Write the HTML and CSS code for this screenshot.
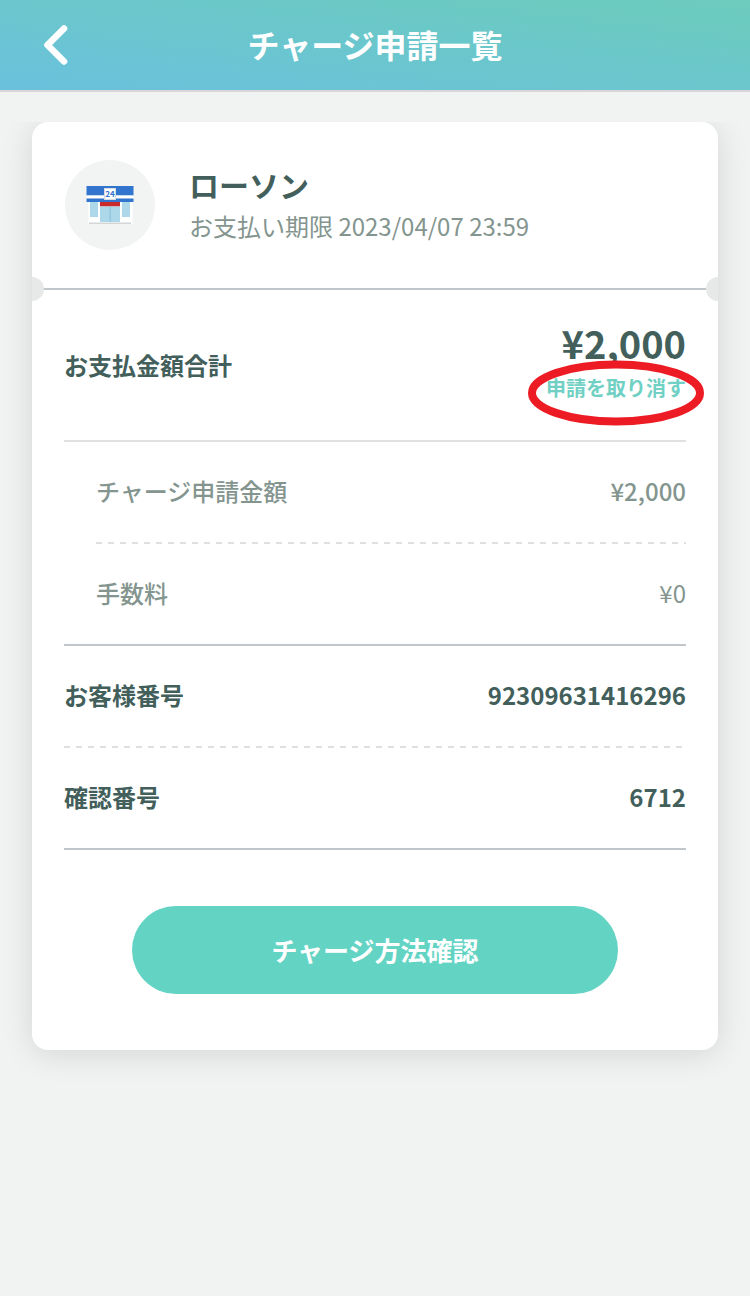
FILE: index.html
```html
<!DOCTYPE html>
<html lang="ja">
  <head>
    <meta charset="UTF-8" />
    <meta name="viewport" content="width=device-width, initial-scale=1.0" />
    <title>チャージ申請一覧</title>
    <link rel="stylesheet" href="styles.css">
  </head>
  <body>
    <header class="header">
      <button type="button" class="back" aria-label="戻る">
        <svg width="24" height="40" viewBox="0 0 24 40">
          <path d="M20 3.5 L3.5 20 L20 36.5" fill="none" stroke="#fff" stroke-width="6.6" stroke-linecap="round" stroke-linejoin="round" />
        </svg>
      </button>
      <h1>チャージ申請一覧</h1>
    </header>

    <main class="main">
      <section class="card">
        <div class="store">
          <div class="store-icon">
            <svg width="90" height="90" viewBox="0 0 90 90">
              <rect x="23.5" y="40" width="44" height="24" fill="#fff" />
              <rect x="21.5" y="26" width="47" height="9.5" fill="#3175cf" />
              <rect x="21.5" y="35.5" width="47" height="3" fill="#fff" />
              <rect x="21.5" y="38.5" width="47" height="3.5" fill="#3175cf" />
              <rect x="25" y="42" width="8" height="15" fill="#add8ea" />
              <rect x="57" y="42" width="8" height="15" fill="#add8ea" />
              <rect x="35" y="42" width="20" height="4.5" fill="#c92a2a" />
              <rect x="35" y="46.5" width="20" height="15.5" fill="#add8ea" />
              <rect x="44.5" y="46.5" width="1.5" height="15.5" fill="#93c7de" />
              <rect x="24" y="62.5" width="42" height="1.5" fill="#d3d5d6" />
              <rect x="39.5" y="28.5" width="11" height="11" fill="#fff" stroke="#d5dbe0" />
              <text x="45" y="37" text-anchor="middle" class="store-sign">24</text>
            </svg>
          </div>
          <div class="store-text">
            <h2>ローソン</h2>
            <p>お支払い期限 2023/04/07 23:59</p>
          </div>
        </div>

        <dl class="details">
          <div class="row total">
            <dt>お支払金額合計</dt>
            <dd>
              <span class="price">¥2,000</span>
              <button type="button" class="cancel">
                申請を取り消す
                <svg class="marker" width="176" height="66" viewBox="0 0 176 66">
                  <ellipse cx="88" cy="33" rx="84" ry="28.5" fill="none" stroke="#ed1c24" stroke-width="8" />
                </svg>
              </button>
            </dd>
          </div>
          <div class="row sub dashed">
            <dt>チャージ申請金額</dt>
            <dd>¥2,000</dd>
          </div>
          <div class="row sub">
            <dt>手数料</dt>
            <dd class="fee">¥0</dd>
          </div>
          <div class="row dashed">
            <dt>お客様番号</dt>
            <dd>92309631416296</dd>
          </div>
          <div class="row">
            <dt>確認番号</dt>
            <dd>6712</dd>
          </div>
        </dl>

        <button type="button" class="submit">チャージ方法確認</button>
      </section>
    </main>
  </body>
</html>
```
FILE: styles.css
```css
/* Reset */
* {
  margin: 0;
  padding: 0;
  box-sizing: border-box;
}

body {
  font-family: "Noto Sans CJK JP", sans-serif;
  font-size: 24px;
  line-height: 36px;
  background: #f1f3f3;
  color: #435f5b;
  min-height: 100vh;
}

button {
  font-family: inherit;
  border: none;
  background: none;
  cursor: pointer;
}

svg {
  display: block;
}

/* Header */
.header {
  display: grid;
  grid-template-columns: 80px 1fr 80px;
  align-items: center;
  height: 92px;
  background: linear-gradient(to top right, #69c1dd, #6cccbc);
  border-bottom: 2px solid #d9d6d9;
}

.header h1 {
  padding-bottom: 2px;
  font-size: 32px;
  font-weight: 700;
  line-height: 48px;
  text-align: center;
  color: #fff;
}

.back {
  justify-self: end;
  padding: 0 12px;
}

/* Card */
.main {
  margin-top: 30px;
  padding: 0 32px 60px;
  overflow: hidden;
}

.card {
  background: #fff;
  border-radius: 16px;
  box-shadow: 0 4px 32px rgba(20, 0, 0, 0.12);
  padding-bottom: 56px;
}

/* Store */
.store {
  position: relative;
  display: flex;
  align-items: center;
  gap: 34px;
  height: 168px;
  padding: 0 33px;
  border-bottom: 2px solid #c1c6ca;
}

/* ticket notches */
.store::before,
.store::after {
  content: "";
  position: absolute;
  bottom: -13px;
  width: 12px;
  height: 24px;
  background: #e7e9e9;
}

.store::before {
  left: 0;
  border-radius: 0 12px 12px 0;
}

.store::after {
  right: 0;
  border-radius: 12px 0 0 12px;
}

.store-icon {
  border-radius: 50%;
  background: #f2f4f4;
}

.store-sign {
  font-size: 8px;
  font-weight: 700;
  fill: #3175cf;
}

.store-text {
  padding-bottom: 2px;
}

.store-text h2 {
  font-size: 30px;
  font-weight: 700;
  line-height: 44px;
}

.store-text p {
  color: #84958f;
  font-weight: 400;
  line-height: 40px;
}

/* Details */
.details {
  padding: 0 32px;
}

.row {
  display: flex;
  align-items: center;
  justify-content: space-between;
  height: 102px;
  padding-bottom: 2px;
  border-bottom: 2px solid #c1c6ca;
  font-weight: 700;
}

.row.total {
  height: 152px;
  padding-bottom: 0;
  border-bottom-color: #dfe1e2;
}

.row.sub {
  color: #84958f;
  font-weight: 500;
}

.row.sub dt {
  padding-left: 32px;
}

.row.dashed {
  border-bottom: none;
  padding-bottom: 4px;
  background: repeating-linear-gradient(to right, #dfdfdf 0 6px, transparent 6px 12px) left bottom / 100% 2px no-repeat;
}

.row.sub.dashed {
  margin-left: 32px;
}

.row.sub.dashed dt {
  padding-left: 0;
}

.row .fee {
  font-weight: 400;
}

.total dd {
  display: flex;
  flex-direction: column;
  align-items: flex-end;
  padding-bottom: 14px;
}

.price {
  font-size: 38px;
  line-height: 60px;
}

.cancel {
  position: relative;
  font-size: 20px;
  font-weight: 700;
  line-height: 30px;
  color: #6fd0c3;
}

.marker {
  position: absolute;
  top: -13px;
  right: -18px;
}

/* Submit */
.submit {
  display: block;
  width: calc(100% - 200px);
  height: 88px;
  margin: 56px auto 0;
  padding-bottom: 2px;
  border-radius: 44px;
  background: #63d4c4;
  color: #fff;
  font-size: 26px;
  font-weight: 700;
}
```
